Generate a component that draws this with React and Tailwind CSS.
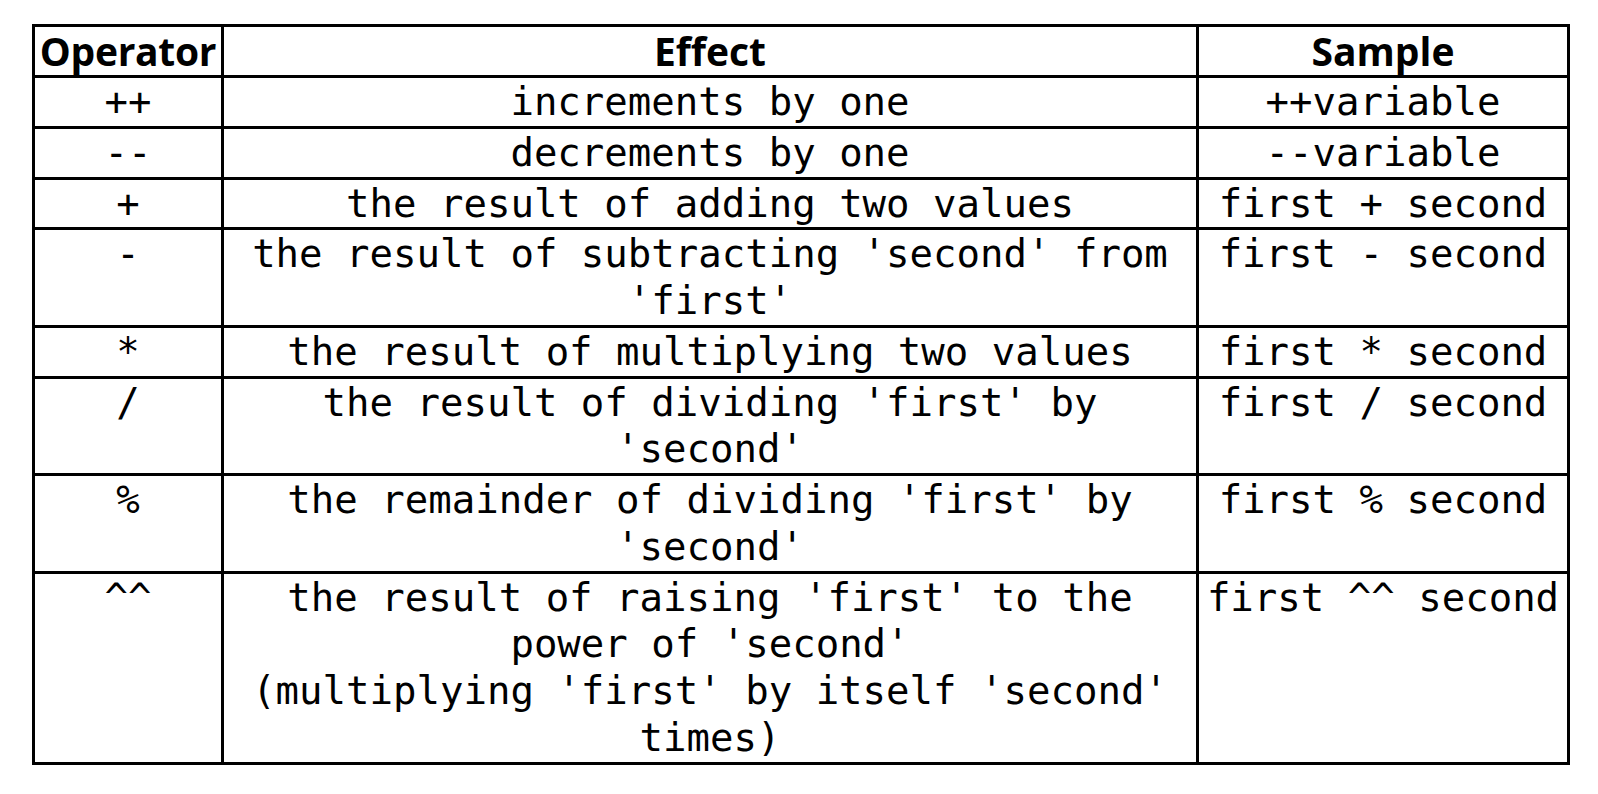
const rows = [
  ["++", "increments by one", "++variable"],
  ["--", "decrements by one", "--variable"],
  ["+", "the result of adding two values", "first + second"],
  ["-", "the result of subtracting 'second' from 'first'", "first - second"],
  ["*", "the result of multiplying two values", "first * second"],
  ["/", "the result of dividing 'first' by 'second'", "first / second"],
  ["%", "the remainder of dividing 'first' by 'second'", "first % second"],
  [
    "^^",
    "the result of raising 'first' to the power of 'second'\n(multiplying 'first' by itself 'second' times)",
    "first ^^ second",
  ],
];

const mono = "font-['DejaVu_Sans_Mono',monospace] text-[39px] leading-[46.7px]";
const cell = "border-[3px] border-black align-top text-center pt-[1.1px] pb-0 px-0";

export default function App() {
  return (
    <div className="bg-white min-h-screen pt-[24px] pl-[32px]">
      <table className="table-fixed w-[1535px] border-collapse border-[3px] border-black text-black">
        <colgroup>
          <col className="w-[189px]" />
          <col className="w-[975px]" />
          <col className="w-[371px]" />
        </colgroup>
        <thead>
          <tr className="font-['Open_Sans',sans-serif] font-bold text-[39px] leading-[48px]">
            <th className="border-[3px] border-black px-0 tracking-[-0.3px]">Operator</th>
            <th className="border-[3px] border-black px-0">Effect</th>
            <th className="border-[3px] border-black px-0">Sample</th>
          </tr>
        </thead>
        <tbody>
          {rows.map(([op, effect, sample]) => (
            <tr key={op}>
              <td className={`${cell} ${mono}`}>{op}</td>
              <td className={`${cell} whitespace-pre-line ${mono}`}>{effect}</td>
              <td className={`${cell} ${mono}`}>{sample}</td>
            </tr>
          ))}
        </tbody>
      </table>
    </div>
  );
}
